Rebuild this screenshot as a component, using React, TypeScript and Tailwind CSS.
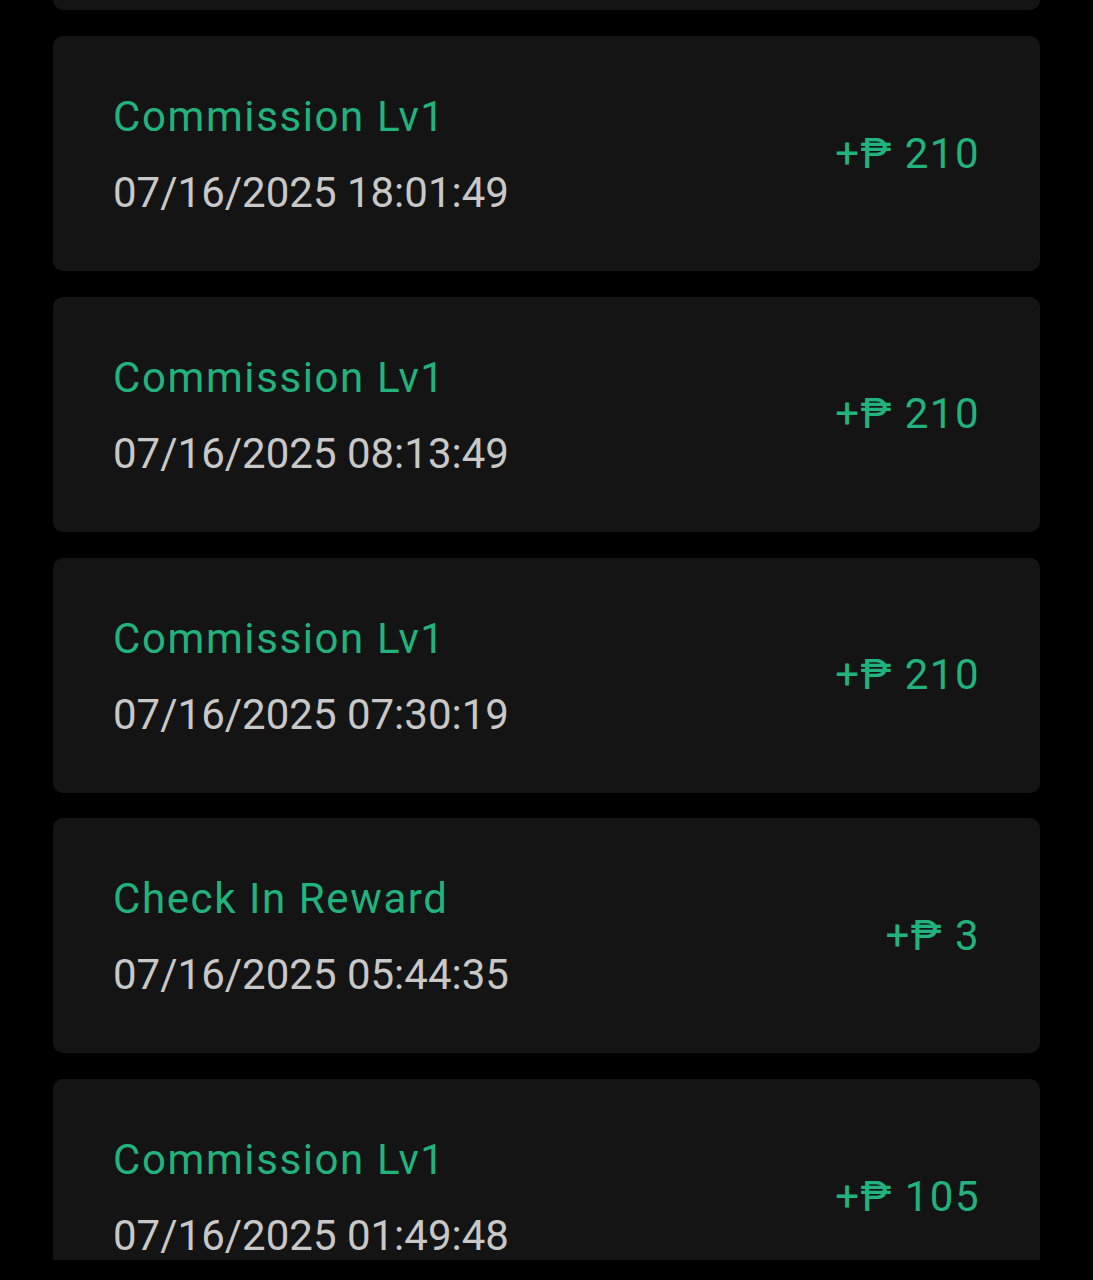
import React from "react";

const items = [
  { title: "Commission Lv1", date: "07/16/2025 18:01:49", amount: "210" },
  { title: "Commission Lv1", date: "07/16/2025 08:13:49", amount: "210" },
  { title: "Commission Lv1", date: "07/16/2025 07:30:19", amount: "210" },
  { title: "Check In Reward", date: "07/16/2025 05:44:35", amount: "3" },
  { title: "Commission Lv1", date: "07/16/2025 01:49:48", amount: "105" },
];

export default function App() {
  return (
    <div className="w-[1093px] h-[1280px] bg-black" style={{ fontFamily: "Roboto, 'Noto Sans', sans-serif" }}>
      <div className="h-[1260px] overflow-hidden">
        <div className="mt-[-224.75px] flex flex-col gap-[25.75px] pl-[53px] pr-[53px]">
          <div className="h-[235px] shrink-0 rounded-[10px] bg-[#141414]" />
          {items.map((it, i) => (
            <div
              key={i}
              className="h-[235px] shrink-0 rounded-[10px] bg-[#141414] flex items-center justify-between pl-[60px] pr-[60px]"
            >
              <div className="flex flex-col pt-[3px]">
                <div className="text-[42px] leading-[50px] text-[#22b27d] tracking-[1.6px]">{it.title}</div>
                <div className="text-[42px] leading-[50px] mt-[26px] text-[#c8c8c8]">{it.date}</div>
              </div>
              <div className="text-[42px] leading-[50px] text-[#22b27d] tracking-[1.5px]">+₱ {it.amount}</div>
            </div>
          ))}
        </div>
      </div>
    </div>
  );
}
